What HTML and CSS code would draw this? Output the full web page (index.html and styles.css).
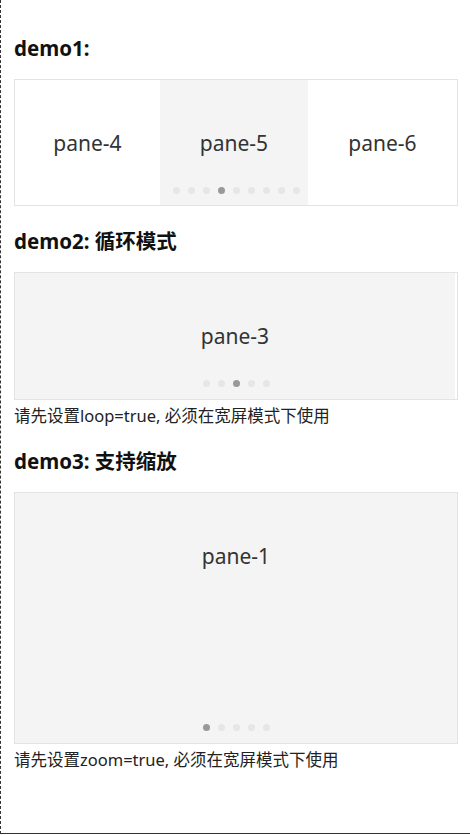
FILE: index.html
```html
<!DOCTYPE html>
<html lang="zh">
<head>
<meta charset="utf-8">
<title>swiper demo</title>
<link rel="stylesheet" href="styles.css">
</head>
<body>
<div class="page">
  <h3 class="title first">demo1:</h3>
  <div class="swiper short">
    <div class="track three">
      <div class="pane">pane-4</div>
      <div class="pane active">pane-5</div>
      <div class="pane">pane-6</div>
    </div>
    <div class="dots">
      <span class="dot"></span><span class="dot"></span><span class="dot"></span><span class="dot on"></span><span class="dot"></span><span class="dot"></span><span class="dot"></span><span class="dot"></span><span class="dot"></span>
    </div>
  </div>

  <h3 class="title">demo2: 循环模式</h3>
  <div class="swiper">
    <div class="track">
      <div class="pane active loop">pane-3</div>
    </div>
    <div class="dots">
      <span class="dot"></span><span class="dot"></span><span class="dot on"></span><span class="dot"></span><span class="dot"></span>
    </div>
  </div>
  <p class="note">请先设置loop=true, 必须在宽屏模式下使用</p>

  <h3 class="title">demo3: 支持缩放</h3>
  <div class="swiper tall">
    <div class="track">
      <div class="pane active zoom">pane-1</div>
    </div>
    <div class="dots">
      <span class="dot on"></span><span class="dot"></span><span class="dot"></span><span class="dot"></span><span class="dot"></span>
    </div>
  </div>
  <p class="note">请先设置zoom=true, 必须在宽屏模式下使用</p>
</div>
</body>
</html>
```
FILE: styles.css
```css
html, body {
  margin: 0;
  padding: 0;
  background: #fff;
}
body {
  font-family: "Noto Sans", "Noto Sans CJK SC", sans-serif;
  color: #222;
}
.page {
  box-sizing: border-box;
  height: 834px;
  border-left: 1px dashed #333;
  border-bottom: 1px solid #333;
  padding: 0 12px 0 13px;
  overflow: hidden;
}
.title {
  margin: 22px 0 18px;
  font-size: 20.5px;
  line-height: 26px;
  font-weight: bold;
  color: #111;
}
.title.first {
  margin-top: 35px;
}
.swiper {
  position: relative;
  border: 1px solid #e3e3e3;
  height: 126px;
  overflow: hidden;
}
.swiper.short {
  height: 125px;
}
.swiper.short .dots {
  bottom: 11px;
}
.swiper.tall {
  height: 250px;
}
.track {
  display: flex;
  height: 100%;
}
.track.three {
  display: grid;
  grid-template-columns: 145px 148px 1fr;
}
.pane {
  flex: 1;
  height: 100%;
  line-height: 126px;
  text-align: center;
  font-size: 21px;
  color: #333;
}
.pane.active {
  background: #f4f4f4;
}
.pane.loop {
  margin-right: 2px;
}
.dots {
  position: absolute;
  left: 0;
  right: 0;
  bottom: 12px;
  display: flex;
  justify-content: center;
  gap: 8px;
}
.dot {
  width: 7px;
  height: 7px;
  border-radius: 50%;
  background: #e6e6e6;
}
.dot.on {
  background: #999;
}
.note {
  margin: 0;
  padding-top: 5px;
  font-size: 16.5px;
  line-height: 21px;
  color: #222;
}
```
